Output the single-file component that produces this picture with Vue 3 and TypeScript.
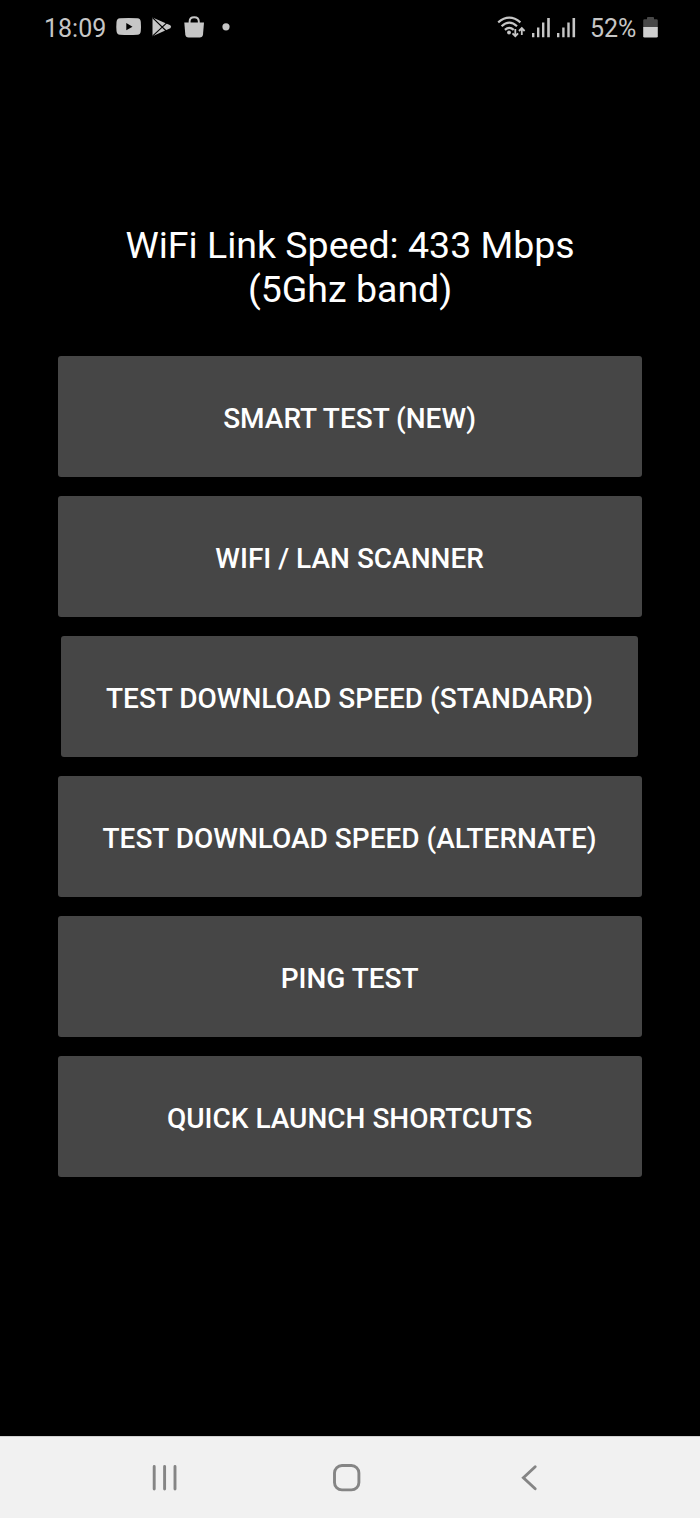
<script setup lang="ts">
interface Action {
  label: string
  narrow?: boolean
}

const actions: Action[] = [
  { label: 'SMART TEST (NEW)' },
  { label: 'WIFI / LAN SCANNER' },
  { label: 'TEST DOWNLOAD SPEED (STANDARD)', narrow: true },
  { label: 'TEST DOWNLOAD SPEED (ALTERNATE)' },
  { label: 'PING TEST' },
  { label: 'QUICK LAUNCH SHORTCUTS' },
]
</script>

<template>
  <div class="screen">
    <header class="status">
      <span class="clock">18:09</span>
      <svg class="notices" width="120" height="30" viewBox="114 12 120 30">
        <path fill="#c6c6c6" fill-rule="evenodd" d="M120 18.2Q128.6 17.6 137.500 18.2Q140.600 18.500 140.800 22Q141.200 26.500 140.800 31Q140.600 34.500 137.500 34.800Q128.600 35.400 120 34.800Q116.800 34.500 116.500 31Q116.100 26.500 116.500 22Q116.800 18.500 120 18.200ZM126.300 23V30.300L132.500 26.650Z" />
        <path fill="#c6c6c6" d="M152.500 17.600L170.300 25.200Q172 26.700 170.300 28.200L152.500 36.200Z" />
        <path fill="none" stroke="#000" stroke-width="1.150" d="M152.500 17.600L167.300 32M152.500 36.200L167.300 22.300" />
        <path fill="#c6c6c6" d="M184.300 22.500H204L203 34.500Q202.700 37.500 199.700 37.500H188.600Q185.600 37.500 185.300 34.500Z" />
        <path fill="none" stroke="#c6c6c6" stroke-width="1.900" d="M189.600 23.500V21.500Q189.600 17.200 194.200 17.200Q198.800 17.200 198.800 21.500V23.500" />
        <circle cx="226" cy="26.800" r="3.600" fill="#c6c6c6" />
      </svg>
      <svg class="network" width="84" height="30" viewBox="496 12 84 30">
        <g fill="none" stroke="#c6c6c6" stroke-width="2.200">
          <path d="M498.200 22.300Q509.300 13 520.400 22.300" />
          <path d="M501.600 26.300Q509.300 19 517 26.300" />
          <path d="M504.900 29.900Q509.300 25.700 513.700 29.900" />
          <path stroke-width="1.800" d="M515.300 29V36M512.500 33.300L515.300 36.200L518.100 33.300M521.800 35V28.300M519 31L521.800 28.100L524.600 31" />
        </g>
        <circle cx="509" cy="32.500" r="1.900" fill="#c6c6c6" />
        <path fill="#c6c6c6" d="M532 33H534.400V37.200H532ZM537 27.600H539.400V37.200H537ZM542 22.600H544.400V37.200H542ZM547.200 18H549.800V37.200H547.200ZM557 33H559.400V37.200H557ZM562.200 27.600H564.600V37.200H562.200ZM567.300 22.600H569.700V37.200H567.300ZM572.500 18H575.100V37.200H572.500Z" />
      </svg>
      <span class="percent">52%</span>
      <svg class="battery" width="20" height="30" viewBox="640 12 20 30">
        <path fill="#484848" d="M647 19.300V17.800Q647 17 648 17H653Q654 17 654 17.800V19.300H656.500Q657.800 19.300 657.800 20.600V27.200H643.200V20.600Q643.200 19.300 644.500 19.300Z" />
        <path fill="#cfcfcf" d="M643.200 27H657.800V36.200Q657.800 37.600 656.400 37.600H644.600Q643.200 37.600 643.200 36.200Z" />
      </svg>
    </header>

    <main class="content">
      <h1 class="title">WiFi Link Speed: 433 Mbps<br />(5Ghz band)</h1>
      <div class="actions">
        <button
          v-for="action in actions"
          :key="action.label"
          type="button"
          class="action"
          :class="{ narrow: action.narrow }"
        >
          {{ action.label }}
        </button>
      </div>
    </main>

    <nav class="navbar">
      <svg width="28" height="30" viewBox="150 1463 28 30" fill="none" stroke="#858585" stroke-width="2.900" stroke-linecap="round">
        <path d="M154.200 1466.500V1489M164.600 1466.500V1489M175 1466.500V1489" />
      </svg>
      <svg class="home" width="30" height="30" viewBox="332 1463 30 30" fill="none" stroke="#858585" stroke-width="2.900">
        <rect x="334.500" y="1465.500" width="24.400" height="24.400" rx="7.500" />
      </svg>
      <svg class="back" width="20" height="30" viewBox="520 1463 20 30" fill="none" stroke="#858585" stroke-width="2.900" stroke-linecap="round">
        <path d="M535.200 1466.700L523.400 1477.700L535.200 1488.800" />
      </svg>
    </nav>
  </div>
</template>

<style>
body {
  background: #000;
}
</style>

<style scoped>
.screen {
  display: flex;
  flex-direction: column;
  width: 700px;
  height: 1518px;
  overflow: hidden;
  background: #000;
  font-family: Roboto, sans-serif;
}

.status {
  display: flex;
  flex: none;
  align-items: center;
  height: 54px;
  padding-left: 44px;
  color: #c6c6c6;
  font-size: 25px;
  line-height: 30px;
  white-space: nowrap;
}

.status svg {
  flex: none;
}

.clock {
  width: 70px;
  padding-top: 4px;
}

.network {
  margin-left: 262px;
}

.percent {
  box-sizing: border-box;
  width: 60px;
  padding: 4px 0 0 10px;
}

.content {
  flex: 1;
  padding: 169px 58.3px 0 57.5px;
}

.title {
  margin: 0;
  padding-left: 1px;
  color: #fff;
  font-size: 37.5px;
  font-weight: 400;
  line-height: 44px;
  text-align: center;
  white-space: nowrap;
}

.actions {
  display: flex;
  flex-direction: column;
  gap: 19.15px;
  margin-top: 44.7px;
}

.action {
  box-sizing: border-box;
  height: 121px;
  padding: 5px 0 0;
  border: 0;
  border-radius: 3px;
  background: #464646;
  color: #fff;
  font-family: inherit;
  font-size: 28px;
  font-weight: 500;
  line-height: 34px;
  white-space: nowrap;
}

.narrow {
  margin: 0 3.5px;
}

.navbar {
  box-sizing: border-box;
  display: flex;
  flex: none;
  align-items: center;
  height: 82px;
  padding: 1px 0 0 150px;
  border-top: 1px solid #d2d2d2;
  background: #f1f1f1;
}

.home {
  margin-left: 154px;
}

.back {
  margin-left: 158px;
}
</style>
